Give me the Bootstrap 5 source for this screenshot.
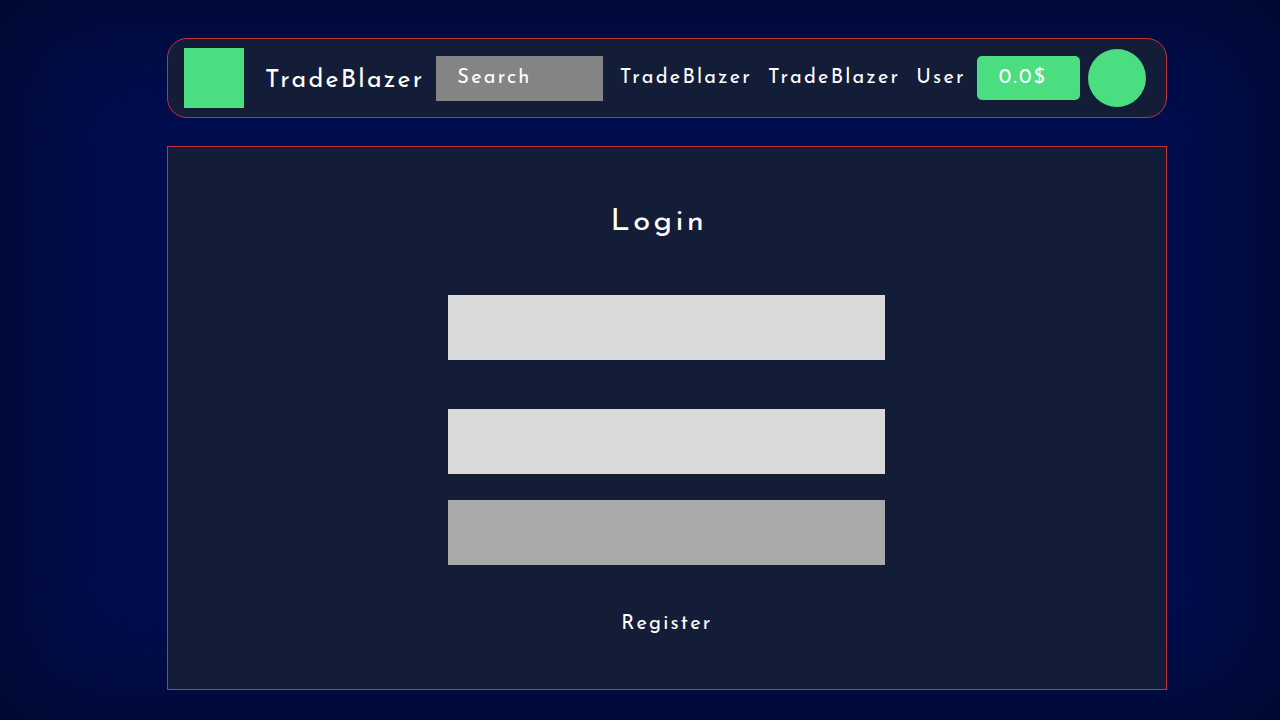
<!DOCTYPE html>
<html lang="en">
<head>
<meta charset="utf-8">
<meta name="viewport" content="width=device-width, initial-scale=1">
<title>TradeBlazer - Login</title>
<link href="https://cdn.jsdelivr.net/npm/bootstrap@5.3.0/dist/css/bootstrap.min.css" rel="stylesheet">
<style>
  body {
    font-family: "Josefin Sans", Lato, sans-serif;
    font-size: 20px;
    line-height: 24px;
    letter-spacing: .11em;
    color: #fff;
    background: #000d4e;
    box-shadow: inset 0 0 100px 30px #000a32;
  }
  .page-shell { width: 78.1%; margin-left: 13.05%; padding: 38px 0 30px; gap: 28px; }
  .panel { background: #141d38; border: 1px solid #c23338; }
  .top-bar { min-height: 80px; padding: 8px 20px 8px 16px; border-radius: 20px; }
  .green { background: #4ade80; }
  .logo-box { width: 60px; height: 60px; margin-right: 21px; }
  .brand-name { font-size: 25px; color: #fff; text-decoration: none; margin-right: 12px; padding-top: 6px; }
  .plain-link { color: #fff; text-decoration: none; }
  .nav-links { margin-right: 3px; }
  .search-box, .search-box:focus {
    width: 167px; height: 45px; padding: 0 21px; border: 0; border-radius: 0;
    font-size: 20px; letter-spacing: .11em; color: #fff; background: #848484;
  }
  .search-box::placeholder { color: #fff; opacity: 1; }
  .balance, .balance:hover {
    width: 103px; height: 44px; padding: 0 0 0 22px; border: 0; border-radius: 5px;
    font-size: 20px; letter-spacing: .11em; color: #fff; background: #4ade80;
  }
  .avatar { width: 58px; height: 58px; border: 0; }
  .login-panel { padding: 56px 20px 40px; }
  .login-title { font-size: 31px; line-height: 40px; font-weight: 400; letter-spacing: .11em; margin-bottom: 52px; }
  .login-form { width: 100%; max-width: 437px; }
  .field, .field:focus { height: 65px; border: 0; border-radius: 0; background: #d9d9d9; }
  .field-gap { margin-bottom: 49px; }
  .submit, .submit:hover { height: 65px; margin-top: 26px; border: 0; border-radius: 0; background: #a9a9a9; }
  .register-link { margin-top: 47px; }
</style>
</head>
<body>
<div class="page-shell d-flex flex-column min-vh-100">
  <header class="panel top-bar d-flex align-items-center">
    <div class="logo-box green flex-shrink-0"></div>
    <a class="brand-name" href="#">TradeBlazer</a>
    <input class="form-control search-box" type="search" placeholder="Search" aria-label="Search">
    <nav class="nav-links d-flex ms-auto gap-3" aria-label="Main">
      <a class="plain-link" href="#">TradeBlazer</a>
      <a class="plain-link" href="#">TradeBlazer</a>
      <a class="plain-link" href="#">User</a>
    </nav>
    <button class="btn balance text-start flex-shrink-0 mx-2" type="button">0.0$</button>
    <button class="avatar green rounded-circle flex-shrink-0" type="button" aria-label="Account"></button>
  </header>
  <main class="panel login-panel flex-grow-1 d-flex flex-column align-items-center">
    <h1 class="login-title pe-3">Login</h1>
    <form class="login-form">
      <input class="form-control field field-gap" type="text" aria-label="Username">
      <input class="form-control field" type="password" aria-label="Password">
      <button class="btn submit w-100" type="submit" aria-label="Login"></button>
    </form>
    <a class="plain-link register-link" href="#">Register</a>
  </main>
</div>
<script src="https://cdn.jsdelivr.net/npm/bootstrap@5.3.0/dist/js/bootstrap.bundle.min.js"></script>
</body>
</html>
